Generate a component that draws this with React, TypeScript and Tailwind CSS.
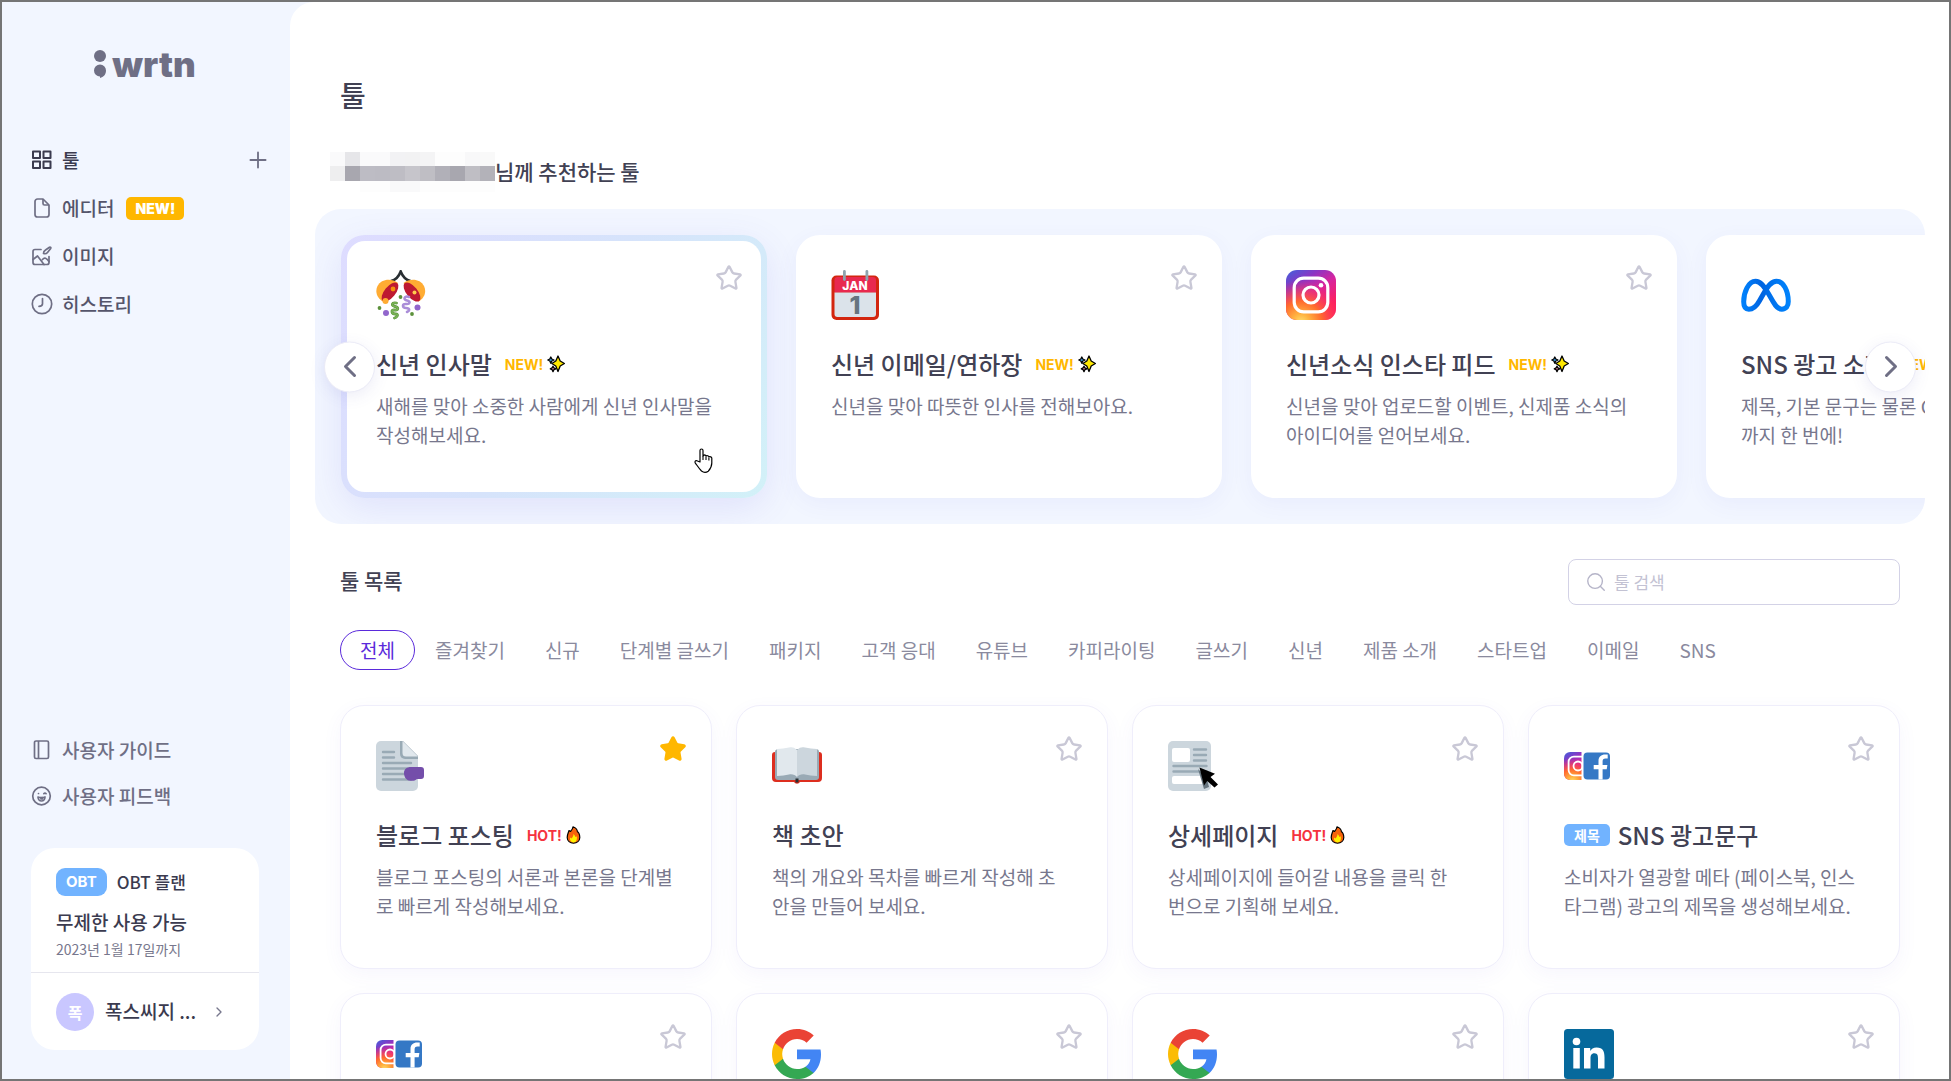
import React, { useState } from 'react';
import { ChevronLeft, ChevronRight, Plus, Search, Star } from 'lucide-react';

type Badge = 'new' | 'hot';

interface Tool {
  icon: React.ReactNode;
  title: string;
  desc: string;
  badge?: Badge;
  tag?: string;
  starred?: boolean;
}

/* ---------- sidebar icons ---------- */

const GridIcon: React.FC = () => (
  <svg width="22" height="22" viewBox="0 0 22 22" fill="none" stroke="#3b3b4f" strokeWidth="2" strokeLinejoin="round">
    <rect x="2" y="2.5" width="7" height="6.5" />
    <rect x="12.5" y="2.5" width="7" height="6.5" />
    <rect x="2" y="12.5" width="7" height="6.5" />
    <rect x="12.5" y="12.5" width="7" height="6.5" />
  </svg>
);

const FileIcon: React.FC = () => (
  <svg width="22" height="22" viewBox="0 0 22 22" fill="none" stroke="#6f6f85" strokeWidth="1.7" strokeLinejoin="round">
    <path d="M4 4.5A2.5 2.5 0 0 1 6.5 2H12l6 6v9.500a2.500 2.500 0 0 1-2.500 2.500h-9A2.500 2.500 0 0 1 4 17.500z" />
    <path d="M12 2v4.500A1.500 1.500 0 0 0 13.500 8H18" />
  </svg>
);

const ImageEditIcon: React.FC = () => (
  <svg width="22" height="22" viewBox="0 0 22 22" fill="none" stroke="#6f6f85" strokeWidth="1.7" strokeLinecap="round" strokeLinejoin="round">
    <path d="M10 4.5H4a2 2 0 0 0-2 2v11a2 2 0 0 0 2 2h12a2 2 0 0 0 2-2v-6" />
    <path d="M2 14.500l4.500-3.500 5 6.500 1.500 2M11.500 14.500c2-2.500 4-1.500 6.500 2" />
    <path d="M12.500 8.500c0-1.500.5-2.500 2-3.500l4-2.800a.9.9 0 0 1 1.200 1.300l-3.200 4c-1 1.200-2.500 1.500-4 1z" />
  </svg>
);

const HistoryIcon: React.FC = () => (
  <svg width="22" height="22" viewBox="0 0 22 22" fill="none" stroke="#6f6f85" strokeWidth="1.7" strokeLinecap="round" strokeLinejoin="round">
    <circle cx="11" cy="11" r="9.7" />
    <path d="M11.500 5.500v5.200c0 1.500-1.200 2.600-3.500 2.600" />
  </svg>
);

const GuideIcon: React.FC = () => (
  <svg width="22" height="22" viewBox="0 0 22 22" fill="none" stroke="#6f6f85" strokeWidth="1.7" strokeLinejoin="round">
    <rect x="3.5" y="2" width="14" height="17.5" rx="1.5" />
    <path d="M7.500 2v17.500" />
  </svg>
);

const FeedbackIcon: React.FC = () => (
  <svg width="22" height="22" viewBox="0 0 22 22" fill="none" stroke="#6f6f85" strokeWidth="1.7" strokeLinecap="round" strokeLinejoin="round">
    <circle cx="10.5" cy="11" r="8.8" />
    <path d="M7.500 8.500h.01M12.800 8.700c.6-.7 1.700-.7 2.300 0" />
    <path d="M7 12c2 .8 5 .8 7 0-.2 2.500-1.500 4-3.500 4S7.200 14.500 7 12z" />
    <path d="M10 12.500v1.500h1.500v-1.500" />
  </svg>
);

/* ---------- tool icons ---------- */

const ConfettiIcon: React.FC = () => (
  <svg width="50" height="50" viewBox="0 0 50 50" fill="none">
    <path d="M15 11c5-1 8-5 9.700-9.500C26.500 6 29 10 34.500 11" stroke="#292f33" strokeWidth="2.6" strokeLinecap="round" />
    <path d="M22 13C15 7.500 5 9 1.500 16c-3 6 0 12.500 5.500 15.500z" fill="#ffac33" />
    <path d="M27.500 13c7-5.500 17-4 20.500 3 3 6 0 12.500-5.500 15.500z" fill="#ffac33" />
    <ellipse cx="14" cy="22" rx="5.5" ry="11.5" transform="rotate(39 14 22)" fill="#be1931" />
    <ellipse cx="36" cy="22" rx="5.5" ry="11.5" transform="rotate(-39 36 22)" fill="#be1931" />
    <circle cx="17" cy="19" r="2.4" fill="#f4900c" />
    <circle cx="9.5" cy="31" r="3" fill="#ffac33" />
    <circle cx="38.5" cy="22.5" r="2" fill="#ffcc4d" />
    <path d="M33 27c-5-2-6 3-2 3.500s3 4-1 3.500-4 4 0 4 4 2.500 1 4" stroke="#aa8dd8" strokeWidth="2.6" strokeLinecap="round" />
    <path d="M20.500 33c-5-1-5.500 3-1.500 3.500s3.500 4-.5 3.500-3 4 1 4 1 3.500-1 4" stroke="#5c913b" strokeWidth="2.8" strokeLinecap="round" />
    <path d="M20.500 33c-5-1-5.500 3-1.500 3.500s3.500 4-.5 3.500-3 4 1 4 1 3.500-1 4" stroke="#77b255" strokeWidth="1.7" strokeLinecap="round" />
    <circle cx="24.5" cy="27" r="1.9" fill="#5c913b" />
    <circle cx="3.5" cy="38" r="1.9" fill="#5c913b" />
    <circle cx="36" cy="44" r="1.9" fill="#5c913b" />
    <circle cx="10" cy="43" r="3" fill="#9266cc" />
    <circle cx="41.5" cy="37.5" r="3" fill="#9266cc" />
  </svg>
);

const CalendarIcon: React.FC = () => (
  <svg width="50" height="50" viewBox="0 0 50 50">
    <rect x="0.5" y="5.5" width="47.5" height="44.5" rx="5" fill="#d3260f" />
    <path d="M3.500 10a3 3 0 0 1 3-3h35.500a3 3 0 0 1 3 3v12.500H3.500z" fill="#e8294f" />
    <path d="M3.500 22.500H45V44a3 3 0 0 1-3 3H6.500a3 3 0 0 1-3-3z" fill="#dbe3ea" />
    <rect x="12" y="0" width="2.8" height="11" rx="1.4" fill="#8fa3ad" />
    <rect x="34.5" y="0" width="2.8" height="11" rx="1.4" fill="#8fa3ad" />
    <text x="24" y="19.8" textAnchor="middle" fontFamily="Inter, sans-serif" fontSize="12" fontWeight="800" fill="#fff">JAN</text>
    <text x="24" y="44" textAnchor="middle" fontFamily="Inter, sans-serif" fontSize="25" fontWeight="800" fill="#66757f">1</text>
  </svg>
);

const InstagramMark: React.FC<{ id: string }> = ({ id }) => (
  <>
    <defs>
      <linearGradient id={`${id}-cool`} x1="0.1" y1="0" x2="0.75" y2="1">
        <stop offset="0" stopColor="#4a5bd8" />
        <stop offset="0.25" stopColor="#8a35c4" />
        <stop offset="0.5" stopColor="#d6249f" />
        <stop offset="0.85" stopColor="#fd1d5d" />
      </linearGradient>
      <radialGradient id={`${id}-warm`} cx="0.3" cy="1.05" r="0.85">
        <stop offset="0" stopColor="#ffe070" />
        <stop offset="0.2" stopColor="#ffb340" />
        <stop offset="0.5" stopColor="#ff6a2e" />
        <stop offset="1" stopColor="#ff2a6a" stopOpacity="0" />
      </radialGradient>
    </defs>
    <rect width="50" height="50" rx="11" fill={`url(#${id}-cool)`} />
    <rect width="50" height="50" rx="11" fill={`url(#${id}-warm)`} />
    <rect x="8.2" y="8.2" width="33.6" height="33.6" rx="9.5" fill="none" stroke="#fff" strokeWidth="3.2" />
    <circle cx="25" cy="25" r="8" fill="none" stroke="#fff" strokeWidth="3.2" />
    <circle cx="35" cy="15.2" r="2.3" fill="#fff" />
  </>
);

const InstagramIcon: React.FC = () => (
  <svg width="50" height="50" viewBox="0 0 50 50">
    <InstagramMark id="insta" />
  </svg>
);

const MetaIcon: React.FC = () => (
  <svg width="50" height="50" viewBox="0 0 50 50" fill="none">
    <defs>
      <linearGradient id="meta" x1="0" y1="0" x2="1" y2="0">
        <stop offset="0" stopColor="#0080fb" />
        <stop offset="0.4" stopColor="#0064e1" />
        <stop offset="0.65" stopColor="#0073ee" />
        <stop offset="1" stopColor="#0082fb" />
      </linearGradient>
    </defs>
    <path
      d="M7.800 39.200C4 39.200 2.700 36 2.700 31.800 2.700 22 7.500 11.200 14.500 11.200c5 0 8.300 4.500 13 12.500l4.500 7.800c3 5.200 5 7.700 8.800 7.700 4.500 0 6.500-3.200 6.500-7.700 0-10.500-4.800-20.300-11.800-20.300-5 0-8.500 4.500-13 12.500l-4 7c-3 5.500-6 8.500-10.700 8.500z"
      stroke="url(#meta)"
      strokeWidth="5"
    />
  </svg>
);

const DocumentIcon: React.FC = () => (
  <svg width="50" height="50" viewBox="0 0 50 50">
    <path d="M5 0h21l16 16v29a5 5 0 0 1-5 5H5a5 5 0 0 1-5-5V5a5 5 0 0 1 5-5z" fill="#ccd6dd" />
    <path d="M24 0h3l15 15v3H29a5 5 0 0 1-5-5z" fill="#99aab5" />
    <path d="M26.500 0L42 15.500H30a3.500 3.500 0 0 1-3.500-3.500z" fill="#e1e8ed" />
    <path d="M7 11h11M7 16.500h11M7 22h28M7 27.500h28M7 33h28M7 38.500h28" stroke="#99aab5" strokeWidth="2.4" strokeLinecap="round" />
    <path d="M35 26h10a3 3 0 0 1 3 3v6a3 3 0 0 1-3 3h-4c-2 2-5 2-8 1.500-3-.5-5-4-5-7.500 0-4 3-6 7-6z" fill="#744eaa" />
  </svg>
);

const BookIcon: React.FC = () => (
  <svg width="50" height="50" viewBox="0 0 50 50">
    <path d="M3 11h44a3 3 0 0 1 3 3v23a4 4 0 0 1-4 4H28a3.500 3.500 0 0 1-6 0H4a4 4 0 0 1-4-4V14a3 3 0 0 1 3-3z" fill="#dd2e1f" />
    <path d="M3 11C3 8 6 8 8 8h34c3 0 5 0 5 3v25a3 3 0 0 1-3 3H6a3 3 0 0 1-3-3z" fill="#99aab5" />
    <path d="M25 9c-3-3-5-3-8-2.500C13 7 9 8 5 8v27c5 0 8-1 12-1.500 4-.5 6 .5 8 2.500z" fill="#e1e8ed" />
    <path d="M25 9c3-3 5-3 8-2.500C37 7 41 8 45 8v27c-5 0-8-1-12-1.500-4-.5-6 .5-8 2.500z" fill="#ccd6dd" />
    <rect x="23.5" y="37.5" width="3" height="4" fill="#292f33" />
  </svg>
);

const NewspaperIcon: React.FC = () => (
  <svg width="50" height="50" viewBox="0 0 50 50">
    <rect width="43" height="50" rx="5" fill="#ccd6dd" />
    <rect x="4" y="7" width="18" height="14" rx="2" fill="#fff" />
    <rect x="4" y="35" width="34" height="8" rx="2" fill="#fff" />
    <path d="M26 8.500h12M26 14h12M26 19.500h12M5.500 25h33M5.500 30.500h33" stroke="#99aab5" strokeWidth="2.4" strokeLinecap="round" />
    <path d="M30 28l6 20 5-2-2-8z" fill="#66757f" />
    <path d="M31.500 26.500l15.500 6.300-4.500 3.200L50 43.500 46.500 46.500l-7.300-6.500-3.200 4.500z" fill="#000" />
  </svg>
);

const InstaFacebookIcon: React.FC<{ id: string }> = ({ id }) => (
  <svg width="50" height="50" viewBox="0 0 50 50">
    <g transform="translate(0 11) scale(0.56)">
      <InstagramMark id={id} />
    </g>
    <rect x="17.5" y="9" width="34" height="32" fill="#fff" />
    <rect x="19.5" y="11.5" width="26.5" height="27" rx="4" fill="#3578c5" />
    <path d="M34.500 38.500V28.300h-4.800v-4.300h4.800v-3.800c0-4.500 2.700-6.700 6.700-6.700h2.500v4h-2.200c-2.200 0-2.900 1.100-2.900 2.900v3.600h4.800l-.7 4.300h-4.100v10.200z" fill="#fff" />
  </svg>
);

const GoogleIcon: React.FC = () => (
  <svg width="50" height="50" viewBox="1 1 22 22">
    <path fill="#4285F4" d="M22.560 12.250c0-.78-.07-1.530-.2-2.250H12v4.260h5.920c-.26 1.370-1.040 2.530-2.210 3.310v2.770h3.570c2.080-1.920 3.280-4.740 3.280-8.090z" />
    <path fill="#34A853" d="M12 23c2.970 0 5.460-.98 7.280-2.660l-3.570-2.770c-.98.66-2.230 1.060-3.710 1.060-2.860 0-5.290-1.930-6.160-4.530H2.180v2.840C3.990 20.530 7.700 23 12 23z" />
    <path fill="#FBBC05" d="M5.840 14.090c-.22-.69-.35-1.430-.35-2.090s.13-1.430.35-2.090V7.070H2.180C1.430 8.550 1 10.220 1 12s.43 3.450 1.180 4.930l2.850-2.220.81-.62z" />
    <path fill="#EA4335" d="M12 5.380c1.620 0 3.060.56 4.210 1.640l3.150-3.150C17.450 2.090 14.970 1 12 1 7.700 1 3.990 3.470 2.180 7.070l3.660 2.840c.87-2.600 3.300-4.530 6.160-4.530z" />
  </svg>
);

const LinkedInIcon: React.FC = () => (
  <svg width="50" height="50" viewBox="0 0 50 50">
    <rect width="50" height="50" rx="3.5" fill="#06699c" />
    <circle cx="12.5" cy="12.5" r="3.8" fill="#fff" />
    <path d="M9.300 19h6.500v20.500H9.300zM20 19h6.200v3c1-1.900 3.200-3.500 6.400-3.500 6.500 0 7.900 4.200 7.900 9.800v11.200H34v-10c0-2.500-.2-5.300-3.500-5.300s-4 2.500-4 5.200v10.100H20z" fill="#fff" />
  </svg>
);

const SparklesIcon: React.FC = () => (
  <svg width="18" height="18" viewBox="0 0 18 18" stroke="#000" strokeWidth="1.3" strokeLinejoin="round">
    <path d="M3.800 2l1 2 2.200 1-2.200 1-1 2.200-1-2.200L.8 5l2-1z" fill="#3fa4ec" />
    <path d="M6 11.200l.9 1.700 1.900.9-1.900.9-.9 1.900-.9-1.900-1.800-.9 1.800-.9z" fill="#f08fb0" />
    <path d="M11 1l2.200 5 4.200 2.500-4.200 2.500L11 16.500 8.800 11 4.800 8.500 8.800 6z" fill="#ffe800" />
  </svg>
);

const FireIcon: React.FC = () => (
  <svg width="15" height="18" viewBox="0 0 15 18">
    <path d="M7 .8c3.500 1.200 4.300 3.200 4.500 5.200.8-.3 2.400 2.600 2.300 5.500C13.700 15 11 17.200 7.500 17.200S1.300 15 1.200 11.500C1.100 8.500 2.300 7 3 4.500l1.500 1C5.500 4.500 6.800 3 7 .8z" fill="#f7630c" stroke="#000" strokeWidth="1.2" strokeLinejoin="round" />
    <path d="M7.500 8c1.500 1.500 1.500 2 2 3 .8 0 1-.5 1.200-1 .8 4-.7 6.400-3.200 6.400S3.700 14.500 4 11.500l1.500 1C6.300 11.500 7.500 10.500 7.500 8z" fill="#fff100" />
  </svg>
);

const HandCursor: React.FC = () => (
  <svg width="19" height="25" viewBox="0 0 19 25" className="absolute left-[347px] top-[207px]">
    <path
      d="M6 14V2.500a1.500 1.500 0 0 1 3 0V8l1.200-1.200c1 0 1.800.4 1.800 1.200.8-.6 2.700-.4 2.800.8 1.200-.4 3 0 3 1.500V15c0 3-1 5.500-3.500 8.200-2 1.300-5 1.200-6.800-.2C5 20.500 3.500 18 1.200 14.800.5 13 2.300 12 3.500 13z"
      fill="#fff"
      stroke="#000"
      strokeWidth="1.2"
      strokeLinejoin="round"
    />
    <path d="M9 8v4M12 8.500V12M14.900 9.500V12.500" stroke="#000" strokeWidth="1.1" />
  </svg>
);

/* ---------- data ---------- */

const recommended: Tool[] = [
  { icon: <ConfettiIcon />, title: '신년 인사말', badge: 'new', desc: '새해를 맞아 소중한 사람에게 신년 인사말을\n작성해보세요.' },
  { icon: <CalendarIcon />, title: '신년 이메일/연하장', badge: 'new', desc: '신년을 맞아 따뜻한 인사를 전해보아요.' },
  { icon: <InstagramIcon />, title: '신년소식 인스타 피드', badge: 'new', desc: '신년을 맞아 업로드할 이벤트, 신제품 소식의\n아이디어를 얻어보세요.' },
  { icon: <MetaIcon />, title: 'SNS 광고 소재', badge: 'new', desc: '제목, 기본 문구는 물론 CTA\n까지 한 번에!' },
];

const tools: Tool[] = [
  { icon: <DocumentIcon />, title: '블로그 포스팅', badge: 'hot', starred: true, desc: '블로그 포스팅의 서론과 본론을 단계별\n로 빠르게 작성해보세요.' },
  { icon: <BookIcon />, title: '책 초안', desc: '책의 개요와 목차를 빠르게 작성해 초\n안을 만들어 보세요.' },
  { icon: <NewspaperIcon />, title: '상세페이지', badge: 'hot', desc: '상세페이지에 들어갈 내용을 클릭 한\n번으로 기획해 보세요.' },
  { icon: <InstaFacebookIcon id="if-1" />, title: 'SNS 광고문구', tag: '제목', desc: '소비자가 열광할 메타 (페이스북, 인스\n타그램) 광고의 제목을 생성해보세요.' },
  { icon: <InstaFacebookIcon id="if-2" />, title: '', desc: '' },
  { icon: <GoogleIcon />, title: '', desc: '' },
  { icon: <GoogleIcon />, title: '', desc: '' },
  { icon: <LinkedInIcon />, title: '', desc: '' },
];

const categories = ['전체', '즐겨찾기', '신규', '단계별 글쓰기', '패키지', '고객 응대', '유튜브', '카피라이팅', '글쓰기', '신년', '제품 소개', '스타트업', '이메일', 'SNS'];

/* ---------- pieces ---------- */

const StarButton: React.FC<{ starred?: boolean; className: string }> = ({ starred, className }) => (
  <button type="button" aria-label="즐겨찾기" className={`absolute ${className}`}>
    <Star size={28} strokeWidth={2} className={starred ? 'fill-[#ffb700] text-[#ffb700]' : 'text-[#c9c8d6]'} />
  </button>
);

const ToolBadge: React.FC<{ kind: Badge }> = ({ kind }) => (
  <span className={`flex items-center gap-1 font-[Inter] text-[14px] font-bold ${kind === 'new' ? 'text-[#ffb700]' : 'text-[#f5333f]'}`}>
    {kind === 'new' ? 'NEW!' : 'HOT!'}
    {kind === 'new' ? <SparklesIcon /> : <FireIcon />}
  </span>
);

const ToolBody: React.FC<{ tool: Tool }> = ({ tool }) => (
  <>
    <div className="h-[50px] w-[50px]">{tool.icon}</div>
    <div className="mt-7 flex h-8 items-center whitespace-nowrap">
      {tool.tag && (
        <span className="mr-2 rounded-[5px] bg-[#71b3ff] px-[10px] text-[14px] font-bold leading-[22px] text-white">{tool.tag}</span>
      )}
      <h3 className="mr-[13px] text-[24px] font-medium leading-[30px] text-[#414153]">{tool.title}</h3>
      {tool.badge && <ToolBadge kind={tool.badge} />}
    </div>
    <p className="mt-[11px] whitespace-pre text-[19px] leading-[29px] text-[#77778d]">{tool.desc}</p>
  </>
);

const NavItem: React.FC<{ icon: React.ReactNode; label: string; active?: boolean; children?: React.ReactNode }> = ({ icon, label, active, children }) => (
  <li className="flex h-12 items-center">
    <a href="#" className={`flex items-center gap-[9px] text-[19px] font-medium ${active ? 'text-[#3b3b4f]' : 'text-[#55556b]'}`}>
      {icon}
      {label}
    </a>
    {children}
  </li>
);

const Sidebar: React.FC = () => (
  <aside className="flex w-72 shrink-0 flex-col pb-[29px] pl-[29px] pr-[31px]">
    <a href="#" aria-label="wrtn" className="mt-[42px] flex h-10 items-center justify-center gap-[6px] text-[#6f6f85]">
      <svg width="12" height="30" viewBox="0 0 12 30" fill="currentColor">
        <circle cx="6" cy="7" r="6" />
        <path d="M6 15.500a6 6 0 0 1 6 6c0 4-2.500 6.700-6 7.500v-1.500a6 6 0 0 1 0-12z" />
      </svg>
      <span className="font-[Inter] text-[35px] font-black leading-10">wrtn</span>
    </a>

    <nav className="mt-[52px]">
      <ul>
        <NavItem icon={<GridIcon />} label="툴" active>
          <button type="button" aria-label="추가" className="-mr-3 ml-auto">
            <Plus size={26} strokeWidth={1.7} className="text-[#6f6f85]" />
          </button>
        </NavItem>
        <NavItem icon={<FileIcon />} label="에디터">
          <span className="ml-3 rounded-[5px] bg-[#ffb700] px-[9px] font-[Inter] text-[14px] font-black leading-[23px] text-white">NEW!</span>
        </NavItem>
        <NavItem icon={<ImageEditIcon />} label="이미지" />
        <NavItem icon={<HistoryIcon />} label="히스토리" />
      </ul>
    </nav>

    <ul className="mt-auto">
      <li>
        <a href="#" className="flex h-[46px] items-center gap-[9px] text-[19px] font-medium text-[#6f6f85]">
          <GuideIcon />
          사용자 가이드
        </a>
      </li>
      <li>
        <a href="#" className="flex h-[46px] items-center gap-[9px] text-[19px] font-medium text-[#6f6f85]">
          <FeedbackIcon />
          사용자 피드백
        </a>
      </li>
    </ul>

    <section className="mt-[29px] rounded-[24px] bg-white">
      <div className="border-b border-[#e6e6ee] px-[25px] pb-[13px] pt-5">
        <div className="flex items-center gap-[10px]">
          <span className="rounded-[9px] bg-[#71b3ff] px-[10px] font-[Inter] text-[15px] font-bold leading-7 text-white">OBT</span>
          <span className="text-[17px] font-medium leading-7 text-[#3b3b4f]">OBT 플랜</span>
        </div>
        <p className="mt-3 text-[19px] font-medium leading-7 text-[#3b3b4f]">무제한 사용 가능</p>
        <p className="mt-[3px] text-[14px] leading-5 text-[#77778d]">2023년 1월 17일까지</p>
      </div>
      <button type="button" className="flex h-[77px] w-full items-center px-[25px] text-left">
        <span className="flex h-[38px] w-[38px] items-center justify-center rounded-full bg-[#c9c7ff] text-[16px] font-bold text-white">폭</span>
        <span className="ml-[11px] text-[19px] font-medium text-[#3b3b4f]">폭스씨지 ...</span>
        <ChevronRight size={16} strokeWidth={2} className="ml-auto mr-[7px] text-[#77778d]" />
      </button>
    </section>
  </aside>
);

/* Pixelated strip that hides the account name */
const maskRows = [
  { y: 0, h: 14, fills: ['#fafafb', '#e6e6e9', '#fafafb', '#fafafb', '#f2f2f4', '#f2f2f3', '#f4f4f5', '#fdfdfd', '#fdfdfd', '#f8f8f9', '#f9f9f9'] },
  { y: 14, h: 15, fills: ['#eeeeef', '#a8a7af', '#bdbcc4', '#bcbbc3', '#bebdc4', '#c6c5cb', '#bfbec4', '#b1b0b8', '#a8a7af', '#bfbec4', '#b3b2b9'] },
  { y: 29, h: 11, fills: ['#ffffff', '#ffffff', '#fdfdfd', '#fdfdfd', '#f9f9fa', '#f9f9fa', '#fdfdfd', '#fdfdfd', '#fdfdfd', '#fdfdfd', '#fdfdfd'] },
];

const NameMask: React.FC = () => (
  <svg width="165" height="40" viewBox="0 0 165 40" shapeRendering="crispEdges" className="-ml-[10px] shrink-0">
    {maskRows.map((row) => row.fills.map((fill, i) => <rect key={`${row.y}-${i}`} x={i * 15} y={row.y} width="15" height={row.h} fill={fill} />))}
  </svg>
);

const carouselButton =
  'absolute top-1/2 flex h-[51px] w-[51px] -translate-y-1/2 items-center justify-center rounded-full border border-[#ebebf7] bg-white text-[#6f6f85] shadow-[0_4px_16px_rgba(80,80,180,0.10)]';

export default function App() {
  const [category, setCategory] = useState('전체');
  const [query, setQuery] = useState('');

  return (
    <div className="flex h-screen overflow-hidden border-2 border-[#757575] bg-[#f2f6ff] font-['Noto_Sans_CJK_KR',sans-serif]">
      <Sidebar />

      <main className="min-w-0 flex-1 overflow-hidden rounded-tl-[24px] bg-white pl-[25px] pr-6 pt-[73px]">
        <h1 className="ml-[25px] text-[28px] font-medium leading-10 text-[#414153]">툴</h1>

        <h2 className="ml-[25px] mt-[37px] flex h-10 items-center text-[21px] font-medium text-[#414153]">
          <NameMask />
          님께 추천하는 툴
        </h2>

        <section className="relative mt-[17px]">
          <div className="flex gap-[29px] overflow-hidden rounded-[26px] bg-[#f2f6ff] p-[26px]">
            {recommended.map((tool, i) => (
              <article
                key={tool.title}
                className={`relative h-[263px] w-[426px] shrink-0 rounded-[24px] ${
                  i === 0
                    ? 'border-[6px] border-transparent p-[29px] shadow-[0_10px_36px_rgba(90,80,220,0.12)] [background:linear-gradient(#fff,#fff)_padding-box,linear-gradient(120deg,#dedcff,#d6e3fb,#d2f1f8)_border-box]'
                    : 'bg-white p-[35px] shadow-[0_6px_22px_rgba(90,80,220,0.06)]'
                }`}
              >
                <StarButton className={i === 0 ? 'right-[18px] top-[23px]' : 'right-6 top-[29px]'} />
                <ToolBody tool={tool} />
                {i === 0 && <HandCursor />}
              </article>
            ))}
          </div>
          <button type="button" aria-label="이전" className={`${carouselButton} left-[9px]`}>
            <ChevronLeft size={36} strokeWidth={2} />
          </button>
          <button type="button" aria-label="다음" className={`${carouselButton} right-[9px]`}>
            <ChevronRight size={36} strokeWidth={2} />
          </button>
        </section>

        <section className="mx-[25px] mt-[35px]">
          <div className="flex items-start justify-between">
            <h2 className="text-[21px] font-medium leading-[42px] text-[#414153]">툴 목록</h2>
            <label className="flex h-[46px] w-[332px] items-center gap-[7px] rounded-[8px] border border-[#d3d2e6] px-4">
              <Search size={22} strokeWidth={1.5} className="shrink-0 text-[#b5b4c8]" />
              <input
                type="text"
                value={query}
                onChange={(e) => setQuery(e.target.value)}
                placeholder="툴 검색"
                aria-label="툴 검색"
                className="w-full bg-transparent text-[17px] outline-none placeholder:text-[#c3c2d3]"
              />
            </label>
          </div>

          <div className="mt-[25px] flex">
            {categories.map((name) => (
              <button
                key={name}
                type="button"
                onClick={() => setCategory(name)}
                className={`h-10 whitespace-nowrap rounded-full border text-[19px] ${
                  category === name ? 'border-[#5a2adb] px-[19px] text-[#5a2adb]' : 'border-transparent px-[19px] text-[#8a8a9e]'
                }`}
              >
                {name}
              </button>
            ))}
          </div>

          <div className="mt-[35px] grid grid-cols-4 gap-6">
            {tools.map((tool, i) => (
              <article key={i} className="relative h-[264px] rounded-[24px] border border-[#efeefb] bg-white p-[35px] shadow-[0_6px_20px_rgba(90,80,220,0.05)]">
                <StarButton starred={tool.starred} className="right-6 top-[29px]" />
                <ToolBody tool={tool} />
              </article>
            ))}
          </div>
        </section>
      </main>
    </div>
  );
}
